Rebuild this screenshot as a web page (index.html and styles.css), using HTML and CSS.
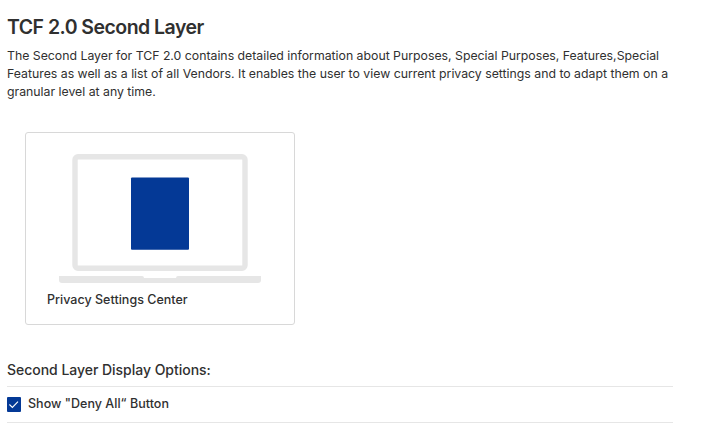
FILE: index.html
```html
<!DOCTYPE html>
<html lang="en">
<head>
<meta charset="utf-8">
<title>TCF 2.0 Second Layer</title>
<link rel="stylesheet" href="styles.css">
</head>
<body>
<main class="page">
  <h1 class="title">TCF 2.0 Second Layer</h1>
  <p class="intro"><span>The Second Layer for TCF 2.0 contains detailed information about Purposes, Special Purposes, Features,Special</span><br><span>Features as well as a list of all Vendors. It enables the user to view current privacy settings and to adapt them on a</span><br><span>granular level at any time.</span></p>
  <section class="card">
    <svg class="laptop" width="202" height="130" viewBox="0 0 202 130" aria-hidden="true">
      <rect x="16" y="3.7" width="170" height="111.5" rx="3" fill="#fff" stroke="#e6e6e6" stroke-width="5.4"/>
      <path d="M0 123H83Q85 123 85 125H117Q117 123 119 123H202V127Q202 130 199 130H3Q0 130 0 127Z" fill="#e6e6e6"/>
      <rect x="72" y="24.4" width="58" height="72.4" rx="1" fill="#043996"/>
    </svg>
    <div class="card-label">Privacy Settings Center</div>
  </section>
  <h2 class="subtitle">Second Layer Display Options:</h2>
  <label class="option">
    <svg class="check" width="14" height="15" viewBox="0 0 14 15" aria-hidden="true"><rect width="14" height="15" rx="1" fill="#043996"/><path d="M2.4 7.5L5.4 10.4L11 4.7" fill="none" stroke="#fff" stroke-width="1.1"/></svg>
    <span class="option-label">Show "Deny All“ Button</span>
  </label>
</main>
</body>
</html>
```
FILE: styles.css
```css
* { box-sizing: border-box; }
body { margin: 0; background: #fff; color: #303030; font-family: Inter, "Liberation Sans", sans-serif; }
.page { width: 673px; padding: 15px 0 0 7px; }
.title { margin: 0; font-size: 19.5px; line-height: 24px; font-weight: 600; letter-spacing: -0.53px; }
.intro { margin: 8px 0 0; font-size: 12.3px; line-height: 18px; letter-spacing: -0.008px; white-space: nowrap; }
.card { margin: 31px 0 0 18px; width: 270px; height: 193px; border: 1px solid #d8d8d8; border-radius: 3px; padding: 20px 0 0 21px; }
.laptop { display: block; margin-left: 12px; }
.card-label { margin-top: 8px; font-size: 12.5px; line-height: 18px; font-weight: 500; letter-spacing: 0.02px; }
.subtitle { margin: 35px 0 0; font-size: 14px; line-height: 20px; font-weight: 500; letter-spacing: -0.03px; }
.option { display: flex; align-items: center; gap: 7px; height: 37px; margin-top: 6px; border-top: 1px solid #e6e6e6; border-bottom: 1px solid #e6e6e6; font-size: 12.5px; font-weight: 500; }
.option-label { line-height: 18px; padding-bottom: 2px; letter-spacing: 0.03px; }
```
